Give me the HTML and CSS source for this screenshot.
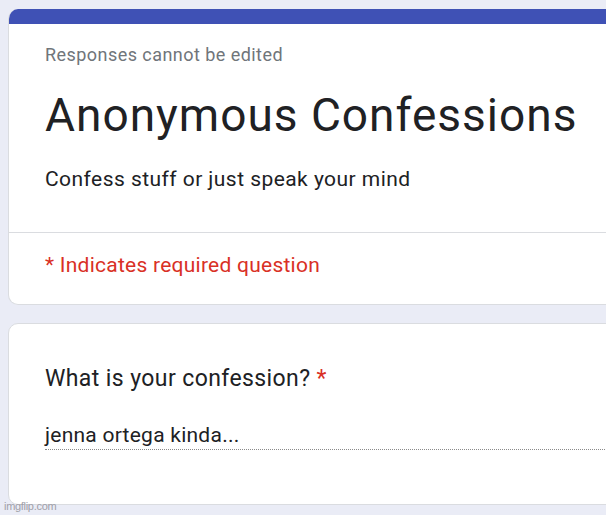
FILE: index.html
```html
<!DOCTYPE html>
<html lang="en">
<head>
<meta charset="utf-8">
<title>Anonymous Confessions</title>
<link rel="stylesheet" href="styles.css">
</head>
<body>
<main class="page">
  <section class="card card-head">
    <div class="accent"></div>
    <div class="head-body">
      <p class="note">Responses cannot be edited</p>
      <h1 class="title">Anonymous Confessions</h1>
      <p class="desc">Confess stuff or just speak your mind</p>
    </div>
    <div class="required-row">
      <p class="required">* Indicates required question</p>
    </div>
  </section>
  <section class="card card-question">
    <p class="question">What is your confession? <span class="star">*</span></p>
    <div class="answer">jenna ortega kinda...</div>
  </section>
</main>
<div class="watermark">imgflip.com</div>
</body>
</html>
```
FILE: styles.css
```css
html, body {
  margin: 0;
  padding: 0;
}
body {
  background: #eaecf6;
  font-family: Roboto, "Liberation Sans", Arial, sans-serif;
  color: #202124;
  width: 606px;
  height: 515px;
  overflow: hidden;
  position: relative;
}
p, h1 {
  margin: 0;
}
.page {
  display: flex;
  flex-direction: column;
  gap: 18px;
  padding: 9px 0 0 8px;
}
.card {
  width: 660px;
  background: #ffffff;
  border: 1px solid #dadce0;
  border-radius: 10px;
  box-sizing: border-box;
}
.card-head {
  border-top: none;
  overflow: hidden;
}
.accent {
  height: 15px;
  background: #3f51b5;
}
.head-body {
  padding: 21px 36px 41px;
  border-bottom: 1px solid #dadce0;
}
.note {
  font-size: 18px;
  line-height: 20px;
  color: #70757a;
  letter-spacing: 0.45px;
}
.title {
  font-weight: 400;
  font-size: 46px;
  line-height: 56px;
  margin-top: 22px;
  letter-spacing: 1px;
}
.desc {
  font-size: 21px;
  line-height: 24px;
  margin-top: 24px;
  letter-spacing: 0.45px;
}
.required-row {
  padding: 20px 36px 27px;
}
.required {
  font-size: 21px;
  line-height: 24px;
  color: #d93025;
  letter-spacing: 0.25px;
}
.card-question {
  padding: 41px 0 54px 36px;
}
.question {
  font-size: 23px;
  line-height: 28px;
  letter-spacing: 0.4px;
}
.star {
  color: #d93025;
}
.answer {
  margin-top: 30px;
  font-size: 21px;
  line-height: 24px;
  letter-spacing: 0.25px;
  padding-bottom: 2px;
  border-bottom: 1px dotted #8a8a8a;
}
.watermark {
  position: absolute;
  left: 4px;
  bottom: 3px;
  font-family: "Liberation Sans", Arial, sans-serif;
  font-size: 11px;
  color: #a0a0a8;
  letter-spacing: -0.3px;
}
```
